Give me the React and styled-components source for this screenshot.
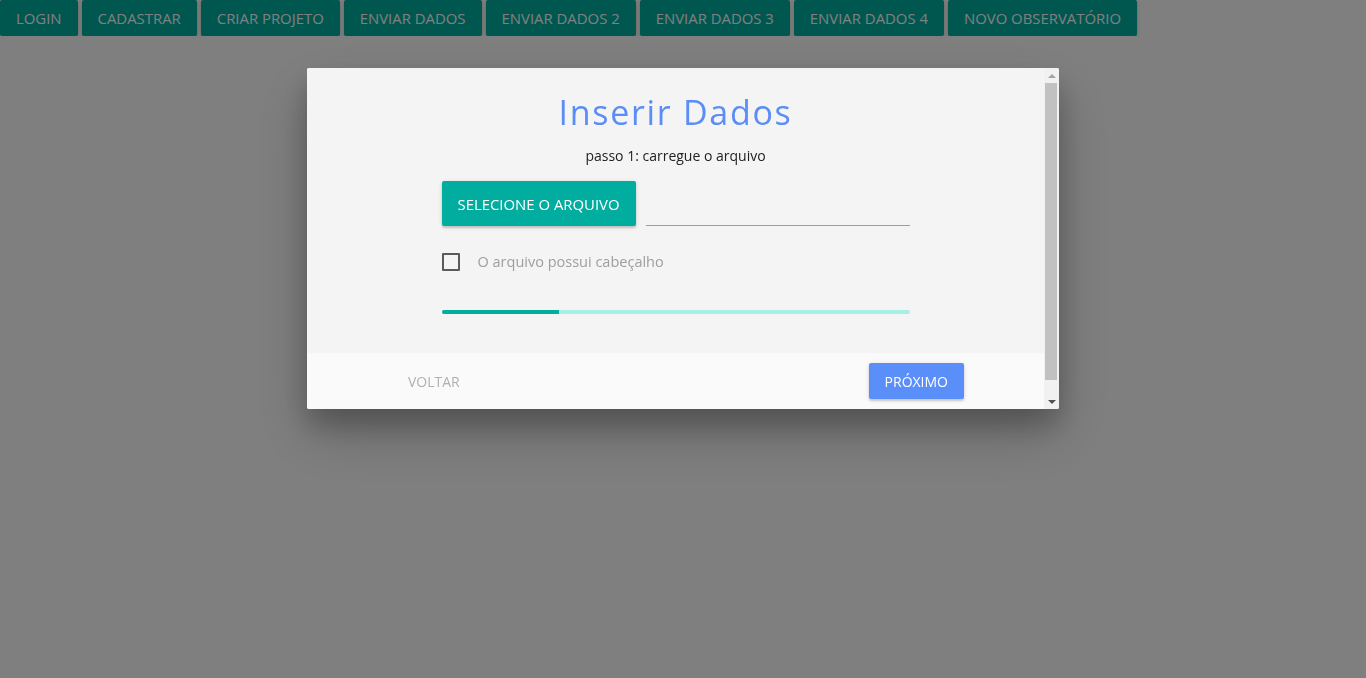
import React from 'react';
import styled, { createGlobalStyle } from 'styled-components';

const GlobalStyle = createGlobalStyle`
  html, body {
    margin: 0;
    padding: 0;
    background: #fff;
    font-family: "Open Sans", "Noto Sans", sans-serif;
  }
`;

const Nav = styled.nav`
  display: flex;
  gap: 4px;
`;

const NavButton = styled.button`
  height: 36px;
  padding: 0 16px;
  border: none;
  border-radius: 2px;
  background: #00ae9f;
  color: #fff;
  font-family: inherit;
  font-size: 14.9px;
  text-transform: uppercase;
  box-shadow: 0 2px 2px 0 rgba(0, 0, 0, 0.14), 0 1px 5px 0 rgba(0, 0, 0, 0.12);
  cursor: pointer;
`;

const Overlay = styled.div`
  position: fixed;
  inset: 0;
  background: rgba(0, 0, 0, 0.5);
  display: flex;
  justify-content: center;
  align-items: flex-start;
  padding-top: 68px;
`;

const Modal = styled.div`
  width: 752px;
  height: 341px;
  display: flex;
  overflow: hidden;
  background: #fafafa;
  border-radius: 2px;
  box-shadow: 0 16px 28px 0 rgba(0, 0, 0, 0.22), 0 25px 55px 0 rgba(0, 0, 0, 0.21);
`;

const Pane = styled.div`
  flex: 1;
  display: flex;
  flex-direction: column;
`;

const ScrollBar = styled.div`
  width: 15px;
  background: #f1f1f1;
  display: flex;
  flex-direction: column;
`;

const Arrow = styled.div`
  height: 15px;
  display: flex;
  align-items: center;
  justify-content: center;

  &::after {
    content: '';
    border-left: 4px solid transparent;
    border-right: 4px solid transparent;
    ${p => p.$down
      ? 'border-top: 4px solid #505050;'
      : 'border-bottom: 4px solid #a3a3a3;'}
  }
`;

const ScrollTrack = styled.div`
  flex: 1;
  padding: 0 2px 14px 1px;
  display: flex;
  flex-direction: column;
`;

const Thumb = styled.div`
  flex: 1;
  background: #c1c1c1;
`;

const Content = styled.div`
  flex: 1;
  background: #f4f4f4;
  padding-top: 22px;
`;

const Title = styled.h4`
  margin: 0;
  text-align: center;
  color: #5b8df6;
  font-size: 34px;
  font-weight: 400;
  letter-spacing: 1.7px;
  line-height: 44px;
`;

const Subtitle = styled.p`
  margin: 12px 0 0;
  text-align: center;
  color: #222;
  font-size: 14px;
  line-height: 20px;
`;

const Column = styled.div`
  width: 468px;
  margin: 0 auto;
`;

const FileRow = styled.div`
  display: flex;
  align-items: flex-end;
  gap: 10px;
  margin-top: 15px;
`;

const RaisedButton = styled.button`
  padding: 0 16px;
  border: none;
  border-radius: 2px;
  background: ${p => p.$color};
  color: #fff;
  font-family: inherit;
  font-size: ${p => p.$size || 14}px;
  text-transform: uppercase;
  box-shadow: 0 2px 2px 0 rgba(0, 0, 0, 0.14), 0 1px 5px 0 rgba(0, 0, 0, 0.12);
  cursor: pointer;
  height: ${p => p.$height || 36}px;
`;

const PathInput = styled.div`
  flex: 1;
  border-bottom: 1px solid #9e9e9e;
`;

const CheckRow = styled.label`
  display: flex;
  align-items: center;
  margin-top: 26px;
  color: #9e9e9e;
  font-size: 14.5px;
`;

const Box = styled.span`
  width: 18px;
  height: 18px;
  box-sizing: border-box;
  border: 2px solid #5a5a5a;
  border-radius: 1px;
  margin-right: 18px;
`;

const Track = styled.div`
  margin-top: 39px;
  height: 4px;
  border-radius: 2px;
  background: #a7f0e6;
  overflow: hidden;
`;

const Fill = styled.div`
  height: 100%;
  background: #00ae9f;
`;

const Footer = styled.div`
  height: 56px;
  flex: none;
  background: #fafafa;
  display: flex;
  align-items: center;
  justify-content: space-between;
  padding: 0 80px 0 85px;
`;

const FlatButton = styled.button`
  border: none;
  background: transparent;
  color: #b0b0b0;
  font-family: inherit;
  font-size: 14px;
  text-transform: uppercase;
  padding: 0 16px;
  height: 36px;
`;

const menu = ['Login', 'Cadastrar', 'Criar projeto', 'Enviar dados', 'Enviar dados 2', 'Enviar dados 3', 'Enviar dados 4', 'Novo observatório'];

const App = () => {
  const progress = 25;
  return (
    <>
      <GlobalStyle />
      <Nav>
        {menu.map(m => <NavButton key={m}>{m}</NavButton>)}
      </Nav>
      <Overlay>
        <Modal>
          <Pane>
            <Content>
              <Title>Inserir Dados</Title>
              <Subtitle>passo 1: carregue o arquivo</Subtitle>
              <Column>
                <FileRow>
                  <RaisedButton $color='#00ad9e' $height={45} $size={14.9}>Selecione o arquivo</RaisedButton>
                  <PathInput />
                </FileRow>
                <CheckRow>
                  <Box />
                  O arquivo possui cabeçalho
                </CheckRow>
                <Track>
                  <Fill style={{ width: `${progress}%` }} />
                </Track>
              </Column>
            </Content>
            <Footer>
              <FlatButton>Voltar</FlatButton>
              <RaisedButton $color='#5a8ffa'>Próximo</RaisedButton>
            </Footer>
          </Pane>
          <ScrollBar>
            <Arrow />
            <ScrollTrack>
              <Thumb />
            </ScrollTrack>
            <Arrow $down />
          </ScrollBar>
        </Modal>
      </Overlay>
    </>
  );
};

export default App;
